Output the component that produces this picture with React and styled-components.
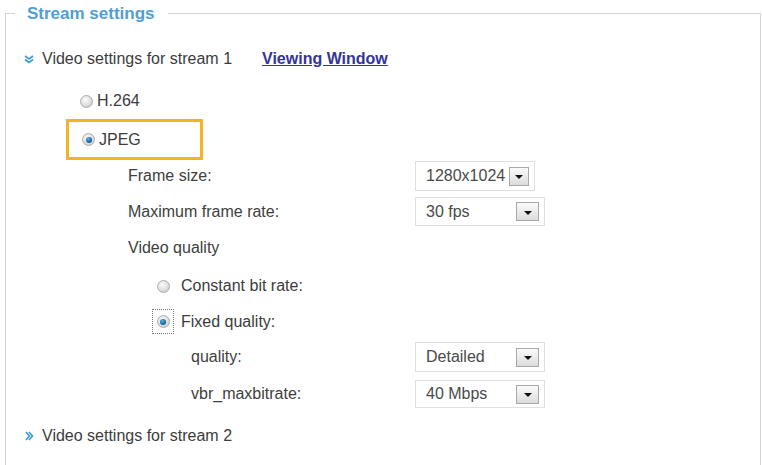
import React from 'react';
import styled, { createGlobalStyle } from 'styled-components';

const GlobalStyle = createGlobalStyle`
  html, body {
    margin: 0;
    padding: 0;
    height: 100%;
    background: #fff;
    overflow: hidden;
  }
  body {
    font-family: "Liberation Sans", Arial, sans-serif;
    color: #3c3c3c;
  }
`;

const Fieldset = styled.fieldset`
  margin: 3px 1px 0 5px;
  padding: 0;
  height: 464px;
  border: 1px solid #d4d4d4;
  box-sizing: border-box;
`;

const Legend = styled.legend`
  margin-left: 9px;
  padding: 0 13px 0 12px;
  font-size: 17px;
  line-height: 21px;
  font-weight: bold;
  color: #519ed3;
`;

const Body = styled.div`
  display: flex;
  flex-direction: column;
  padding-top: 21px;
`;

const Row = styled.div`
  display: flex;
  align-items: center;
  height: ${p => p.$h || 28}px;
  margin-top: ${p => p.$mt || 0}px;
  padding-left: ${p => p.$indent || 0}px;
  font-size: 16px;
`;

const Chevron = styled.svg`
  width: 10px;
  height: 10px;
  margin-left: 18px;
  margin-right: 8px;
  flex: none;
`;

const LinkText = styled.a`
  margin-left: 30px;
  font-weight: bold;
  color: #34349a;
  text-decoration: underline;
  cursor: pointer;
`;

const Highlight = styled.div`
  display: flex;
  align-items: center;
  box-sizing: border-box;
  width: 137px;
  height: 41px;
  margin-top: 5px;
  margin-left: 60px;
  padding-left: 13px;
  border: 3px solid #f2b51f;
  font-size: 16px;
`;

const Radio = styled.span`
  display: inline-block;
  box-sizing: border-box;
  width: 13px;
  height: 13px;
  border-radius: 50%;
  border: 1px solid #adadad;
  background: radial-gradient(circle at 40% 35%, #fbfbfb 0%, #dedede 55%, #c2c2c2 100%);
  margin-right: 4px;
  position: relative;
  flex: none;

  &::after {
    content: '';
    display: ${p => (p.$checked ? 'block' : 'none')};
    position: absolute;
    left: 2.5px;
    top: 2.5px;
    width: 6px;
    height: 6px;
    border-radius: 50%;
    background: radial-gradient(circle at 40% 35%, #5fb0e6 0%, #1b6ca6 55%, #0d3f66 100%);
  }
`;

const Focus = styled.span`
  display: inline-flex;
  align-items: center;
  justify-content: center;
  box-sizing: border-box;
  width: 22px;
  height: 25px;
  margin-left: -5px;
  margin-right: 7px;
  border: 1px dotted #7a7a7a;

  ${Radio} {
    margin-right: 0;
  }
`;

const Gap = styled.span`
  display: inline-block;
  width: ${p => p.$w}px;
`;

const FieldRow = styled.div`
  display: grid;
  grid-template-columns: 409px auto;
  align-items: center;
  height: ${p => p.$h || 30}px;
  margin-top: ${p => p.$mt || 0}px;
  font-size: 16px;
`;

const Label = styled.span`
  padding-left: ${p => p.$indent}px;
  color: #404040;
`;

const Select = styled.div`
  display: flex;
  align-items: center;
  justify-content: space-between;
  box-sizing: border-box;
  width: ${p => p.$w || 130}px;
  height: ${p => p.$h || 30}px;
  padding: 0 5px 0 10px;
  border: 1px solid #e0e0e0;
  color: #4a4a4a;
  font-size: 16px;
`;

const DropButton = styled.span`
  display: flex;
  align-items: center;
  justify-content: center;
  box-sizing: border-box;
  width: ${p => p.$w || 23}px;
  height: 19px;
  border: 1px solid #a8a8a8;
  background: linear-gradient(#fbfbfb, #dcdcdc);

  &::after {
    content: '';
    width: 0;
    height: 0;
    border-left: 4px solid transparent;
    border-right: 4px solid transparent;
    border-top: 4px solid #111;
    margin-top: 2px;
  }
`;

const DownChevron = () => (
  <Chevron viewBox="0 0 10 10">
    <path d="M1 2 L5 5 L9 2 M1 5.5 L5 8.5 L9 5.5" fill="none" stroke="#3a98d6" strokeWidth="1.6" />
  </Chevron>
);

const RightChevron = () => (
  <Chevron viewBox="0 0 10 10">
    <path d="M2 1 L5.5 5 L2 9 M5 1 L8.5 5 L5 9" fill="none" stroke="#3a98d6" strokeWidth="1.6" />
  </Chevron>
);

const Dropdown = ({ value, w, h, bw }) => (
  <Select $w={w} $h={h}>
    <span>{value}</span>
    <DropButton $w={bw} />
  </Select>
);

export default function App() {
  return (
    <>
      <GlobalStyle />
      <Fieldset>
        <Legend>Stream settings</Legend>
        <Body>
          <Row>
            <DownChevron />
            <span>Video settings for stream 1</span>
            <LinkText>Viewing Window</LinkText>
          </Row>

          <Row $mt={15} $h={26} $indent={74}>
            <Radio />
            <span>H.264</span>
          </Row>

          <Highlight>
            <Radio $checked />
            <span>JPEG</span>
          </Highlight>

          <FieldRow $mt={1}>
            <Label $indent={122}>Frame size:</Label>
            <Dropdown value="1280x1024" w={120} bw={20} />
          </FieldRow>

          <FieldRow $mt={6} $h={29}>
            <Label $indent={122}>Maximum frame rate:</Label>
            <Dropdown value="30 fps" h={29} />
          </FieldRow>

          <Row $mt={8} $indent={122}>
            <Label $indent={0}>Video quality</Label>
          </Row>

          <Row $mt={10} $indent={151}>
            <Radio />
            <Gap $w={7} />
            <span>Constant bit rate:</span>
          </Row>

          <Row $mt={9} $h={25} $indent={151}>
            <Focus>
              <Radio $checked />
            </Focus>
            <span>Fixed quality:</span>
          </Row>

          <FieldRow $mt={8}>
            <Label $indent={185}>quality:</Label>
            <Dropdown value="Detailed" />
          </FieldRow>

          <FieldRow $mt={8} $h={28}>
            <Label $indent={185}>vbr_maxbitrate:</Label>
            <Dropdown value="40 Mbps" h={28} />
          </FieldRow>

          <Row $mt={14}>
            <RightChevron />
            <span>Video settings for stream 2</span>
          </Row>
        </Body>
      </Fieldset>
    </>
  );
}
